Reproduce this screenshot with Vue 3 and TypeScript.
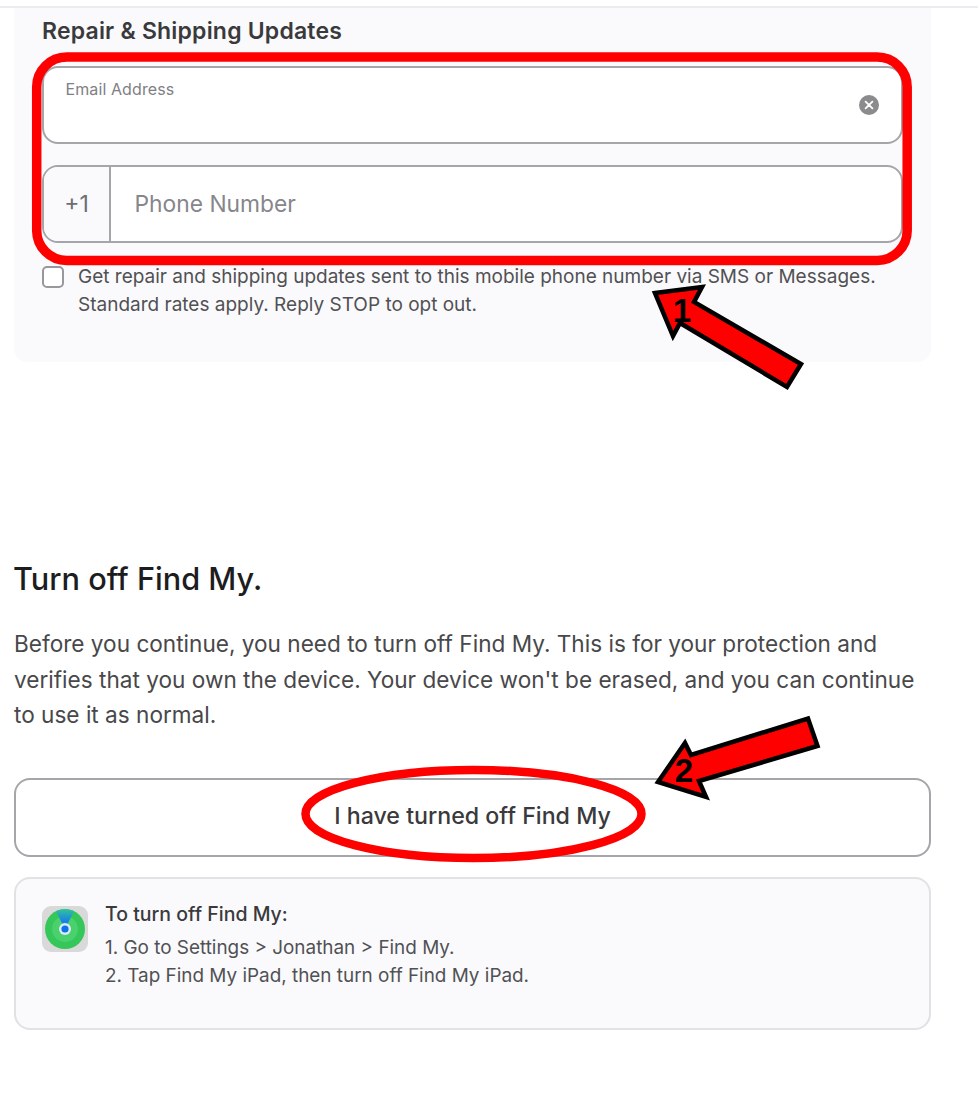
<script setup lang="ts">
const steps: string[] = [
  'Go to Settings > Jonathan > Find My.',
  'Tap Find My iPad, then turn off Find My iPad.',
];
</script>

<template>
  <div class="page">
    <div class="top-rule"></div>

    <section class="updates">
      <h2 class="updates-title">Repair &amp; Shipping Updates</h2>

      <div class="field email-field">
        <span class="field-label">Email Address</span>
        <input class="email-input" type="email" aria-label="Email Address">
        <svg class="clear" width="20" height="20" viewBox="0 0 20 20">
          <circle cx="10" cy="10" r="10" fill="#8b8b8e" />
          <path d="M6.6 6.6l6.8 6.8M13.4 6.6l-6.8 6.8" stroke="#fff" stroke-width="1.8" stroke-linecap="round" />
        </svg>
      </div>

      <div class="field phone-field">
        <span class="prefix">+1</span>
        <input class="phone-input" type="tel" placeholder="Phone Number">
      </div>

      <label class="consent">
        <input class="check" type="checkbox">
        <span>Get repair and shipping updates sent to this mobile phone number via SMS or Messages.<br>Standard rates apply. Reply STOP to opt out.</span>
      </label>
    </section>

    <section class="find-my">
      <h1 class="find-title">Turn off Find My.</h1>
      <p class="find-text">
        Before you continue, you need to turn off Find My. This is for your protection and verifies that you own the device. Your device won't be erased, and you can continue to use it as normal.
      </p>

      <button class="confirm" type="button">I have turned off Find My</button>

      <div class="howto">
        <svg class="app-icon" width="46" height="46" viewBox="0 0 46 46">
          <defs>
            <linearGradient id="wedge" x1="0" y1="0" x2="0" y2="1">
              <stop offset="0" stop-color="#2fc49a" />
              <stop offset="0.6" stop-color="#1a80e6" />
            </linearGradient>
          </defs>
          <rect width="46" height="46" rx="9" fill="#d9d9da" />
          <circle cx="23" cy="23" r="20" fill="#35c759" />
          <circle cx="23" cy="23" r="13" fill="#4ad06c" />
          <path d="M14 5.2C19 2.6 27 2.6 32 5.2L23 23Z" fill="url(#wedge)" />
          <circle cx="23" cy="23" r="6" fill="#dce9f7" />
          <circle cx="23" cy="23" r="3.6" fill="#0a72e8" />
        </svg>
        <div>
          <div class="howto-title">To turn off Find My:</div>
          <ol class="howto-steps">
            <li v-for="(step, i) in steps" :key="i">{{ i + 1 }}. {{ step }}</li>
          </ol>
        </div>
      </div>
    </section>

    <!-- red callouts drawn over the screenshot -->
    <svg class="callouts" width="978" height="1093" viewBox="0 0 978 1093">
      <rect x="36.7" y="57" width="870.5" height="203.5" rx="30" fill="none" stroke="#ff0000" stroke-width="9.5" />
      <ellipse cx="473.5" cy="814" rx="168" ry="44" fill="none" stroke="#ff0000" stroke-width="8.5" />
      <path d="M655 293 702 287 694 302 801 364 787 387 680 323 673 336Z" fill="#ff0000" stroke="#000" stroke-width="4.5" />
      <path d="M658 782 685 743 691 755 808 718.5 817.5 746 699 781 706 797Z" fill="#ff0000" stroke="#000" stroke-width="4.5" />
      <text class="callout-num" x="682" y="322" text-anchor="middle">1</text>
      <text class="callout-num" x="684" y="782" text-anchor="middle">2</text>
    </svg>
  </div>
</template>

<style scoped>
.page {
  position: relative;
  width: 978px;
  height: 1093px;
  overflow: hidden;
  background: #fff;
  font-family: Inter, "Liberation Sans", sans-serif;
  color: #1d1d1f;
}

.top-rule {
  height: 2px;
  margin-top: 6px;
  background: #ececf0;
}

.updates {
  box-sizing: border-box;
  width: 917px;
  height: 354px;
  margin-left: 14px;
  padding: 11px 28px 0;
  background: #fafafc;
  border-radius: 0 0 14px 14px;
}

.updates-title {
  margin: 0 0 22px;
  font-size: 23px;
  line-height: 25px;
  font-weight: 600;
  letter-spacing: 0.2px;
  color: #3a3a3d;
}

.field {
  box-sizing: border-box;
  display: flex;
  width: 861px;
  height: 78px;
  background: #fff;
  border: 2px solid #a6a6aa;
  border-radius: 16px;
}

.email-field {
  position: relative;
  padding: 11px 21.5px;
  flex-direction: column;
}

.field-label {
  font-size: 16px;
  line-height: 20px;
  letter-spacing: 0.1px;
  color: #808084;
}

.email-input,
.phone-input {
  border: 0;
  outline: 0;
  padding: 0;
  background: transparent;
  font: inherit;
  color: #1d1d1f;
}

.clear {
  position: absolute;
  top: 27px;
  right: 22px;
}

.phone-field {
  margin-top: 21px;
  overflow: hidden;
}

.prefix {
  box-sizing: border-box;
  width: 67px;
  flex: none;
  display: flex;
  align-items: center;
  justify-content: center;
  padding-bottom: 1px;
  font-size: 23px;
  color: #6e6e73;
  background: #fafafc;
  border-right: 2px solid #a6a6aa;
}

.phone-input {
  flex: 1;
  padding: 0 0 2px 23.5px;
  font-size: 22.8px;
}

.phone-input::placeholder {
  color: #86868b;
  opacity: 1;
}

.consent {
  display: flex;
  gap: 14px;
  margin-top: 20px;
  font-size: 19px;
  line-height: 28px;
  color: #515154;
}

.check {
  appearance: none;
  box-sizing: border-box;
  flex: none;
  width: 22px;
  height: 22px;
  margin: 3px 0 0;
  background: #fff;
  border: 2px solid #98989c;
  border-radius: 5px;
}

.find-my {
  width: 917px;
  margin-left: 14px;
  padding-top: 194px;
}

.find-title {
  margin: 0 0 0 -1px;
  font-size: 30.7px;
  line-height: 46px;
  font-weight: 500;
  color: #1d1d1f;
}

.find-text {
  margin: 24px 0 0;
  font-size: 22.6px;
  line-height: 35.5px;
  color: #48484a;
}

.confirm {
  display: block;
  box-sizing: border-box;
  width: 100%;
  height: 79px;
  margin-top: 45px;
  padding-bottom: 3px;
  background: #fff;
  border: 2px solid #a6a6aa;
  border-radius: 16px;
  font-family: inherit;
  font-size: 23.2px;
  font-weight: 500;
  color: #3a3a3d;
}

.howto {
  box-sizing: border-box;
  display: flex;
  gap: 17px;
  height: 153px;
  margin-top: 20px;
  padding: 24px 26px;
  background: #fafafc;
  border: 2px solid #e2e2e6;
  border-radius: 16px;
}

.app-icon {
  flex: none;
  margin-top: 3px;
}

.howto-title {
  font-size: 19.5px;
  line-height: 22px;
  font-weight: 500;
  color: #3a3a3d;
}

.howto-steps {
  list-style: none;
  margin: 9px 0 0;
  padding: 0;
  font-size: 18.9px;
  line-height: 28px;
  color: #515154;
}

.callouts {
  position: absolute;
  top: 0;
  left: 0;
  pointer-events: none;
}

.callout-num {
  font-family: "Liberation Sans", Arial, sans-serif;
  font-size: 33px;
  font-weight: 700;
  fill: #000;
}
</style>
